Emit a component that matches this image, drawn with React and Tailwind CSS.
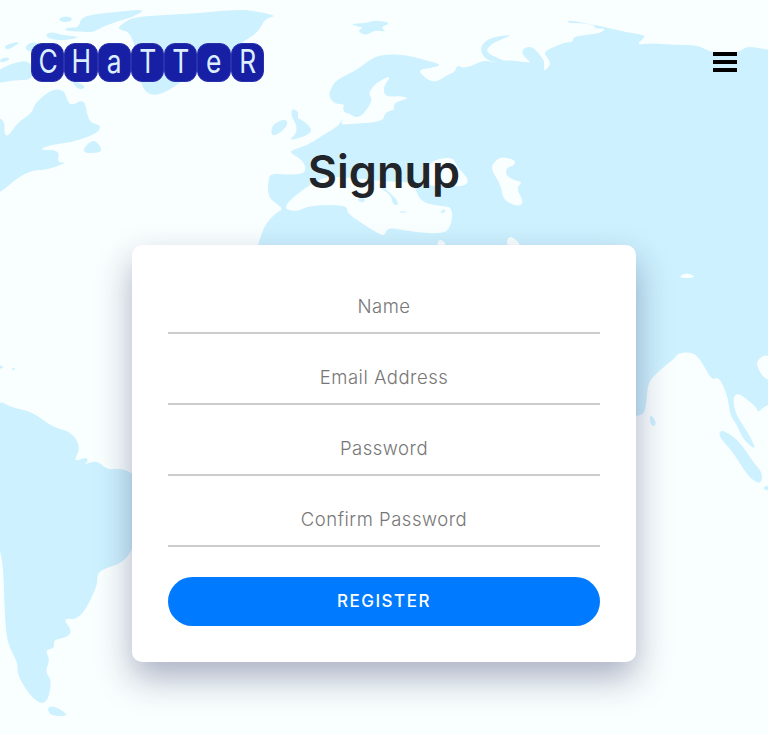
const smooth = (p) => {
  const m = (a, b) => [(a[0] + b[0]) / 2, (a[1] + b[1]) / 2];
  const n = p.length;
  const s = m(p[n - 1], p[0]);
  let d = `M${s[0]} ${s[1]}`;
  for (let i = 0; i < n; i++) {
    const e = m(p[i], p[(i + 1) % n]);
    d += `Q${p[i][0]} ${p[i][1]} ${e[0]} ${e[1]}`;
  }
  return d + "Z";
};

const land = [
  // Eurasia and Africa, west coast going clockwise
  [330, 90], [336, 80], [357, 70], [372, 58], [385, 54], [407, 55], [425, 60], [443, 65], [430, 68], [418, 70], [425, 78], [433, 82],
  [440, 80], [447, 75], [455, 72], [457, 65], [463, 68], [472, 66], [483, 60], [497, 63], [503, 60], [518, 61], [531, 63], [528, 60], [521, 53],
  [525, 47], [533, 47], [540, 55], [545, 62], [543, 72], [551, 65], [548, 58], [543, 52], [558, 45], [567, 42], [573, 42], [573, 37], [585, 35], [601, 33],
  [606, 28], [595, 29], [595, 25], [580, 23], [568, 23], [568, 20], [585, 23], [605, 27], [625, 32], [645, 35], [644, 38], [636, 45], [651, 43],
  [675, 45], [698, 45], [710, 52], [725, 53], [740, 52], [745, 47], [755, 47], [768, 50], [790, 52], [790, 410], [768, 403], [758, 413], [757, 408],
  [748, 400], [738, 393], [733, 397], [735, 413], [745, 428], [753, 442], [755, 449], [749, 445], [742, 437], [737, 425], [730, 415], [728, 398],
  [723, 385], [718, 377], [712, 380], [705, 368], [699, 358], [692, 352], [678, 353], [675, 358], [660, 370], [648, 382], [647, 397], [645, 412], [640, 416],
  [600, 420], [300, 420], [240, 300], [258, 245], [262, 232], [267, 222], [276, 213], [283, 209], [278, 205], [268, 197], [268, 183], [270, 173], [290, 175],
  [307, 173], [303, 160], [290, 153], [292, 150], [308, 145], [320, 137], [340, 125], [342, 118], [350, 116], [342, 110], [345, 104], [335, 104], [329, 97],
];

const seas = [
  // Baltic
  [[392, 75], [377, 82], [368, 93], [373, 100], [363, 115], [355, 118], [346, 111], [340, 125], [347, 124], [383, 122], [385, 112], [395, 110], [393, 103], [410, 98], [400, 96], [385, 97], [383, 87]],
  // Mediterranean
  [[281, 208], [297, 212], [310, 205], [347, 205], [347, 213], [360, 222], [377, 233], [385, 236], [387, 227], [413, 232], [443, 234], [451, 227], [453, 207], [440, 206], [420, 202], [413, 182], [395, 182], [350, 178], [327, 176], [307, 186]],
  // Black Sea
  [[426, 162], [453, 156], [457, 167], [470, 180], [463, 187], [443, 185], [426, 187]],
  // Caspian
  [[490, 168], [497, 159], [503, 157], [515, 160], [515, 165], [506, 168], [506, 175], [513, 180], [523, 182], [516, 188], [524, 202], [518, 207], [503, 200], [501, 185]],
  // Red Sea and gulfs
  [[508, 237], [513, 237], [522, 246], [506, 246]],
  [[436, 246], [440, 238], [448, 246]],
  [[677, 278], [687, 272], [697, 278]],
  [[768, 353], [757, 360], [757, 368], [768, 383], [780, 370]],
];

const islands = [
  // Greenland
  [[117, 29], [122, 24], [133, 17], [165, 15], [200, 13], [230, 10], [250, 10], [278, 16], [265, 18], [258, 33], [240, 43], [225, 62], [190, 75], [170, 90], [155, 96], [145, 92], [140, 80], [133, 33]],
  // Canadian arctic
  [[88, 15], [115, 12], [147, 9], [133, 17], [115, 22], [100, 28], [92, 33], [72, 30], [80, 25], [80, 20]],
  [[58, 19], [65, 16], [73, 18], [70, 22], [62, 22]],
  [[46, 34], [52, 32], [62, 35], [82, 37], [62, 41], [47, 38]],
  [[65, 28], [80, 27], [88, 32], [66, 31]],
  [[4, 45], [22, 41], [12, 48], [6, 50]],
  [[25, 45], [37, 41], [40, 50], [27, 52]],
  [[0, 59], [8, 57], [10, 60], [0, 63]],
  [[-5, 72], [12, 63], [31, 60], [34, 80], [14, 80], [-5, 84]],
  [[72, 80], [86, 86], [82, 90], [75, 87]],
  // North America
  [[52, 89], [62, 90], [65, 93], [70, 107], [85, 98], [88, 122], [100, 125], [100, 130], [93, 135], [73, 142], [50, 145], [38, 150], [60, 150], [57, 163], [68, 162], [47, 170], [33, 170], [17, 178], [0, 193], [-10, 195], [-10, 115], [5, 120], [4, 133], [8, 137], [17, 123], [32, 113], [35, 103]],
  [[93, 138], [102, 148], [100, 153], [80, 153]],
  [[-3, 168], [4, 171], [-3, 175]],
  // Iceland, Britain
  [[272, 126], [280, 120], [288, 120], [286, 128], [275, 136], [271, 134]],
  [[292, 108], [299, 112], [297, 118], [304, 121], [313, 130], [306, 136], [288, 141], [296, 134], [297, 125], [291, 116]],
  // Novaya Zemlya, Svalbard
  [[479, 50], [487, 38], [515, 34], [497, 41], [489, 46], [486, 52], [497, 58], [508, 62], [488, 62]],
  [[348, 24], [367, 23], [375, 20], [392, 23], [380, 27], [387, 32], [375, 30], [365, 36], [357, 30], [365, 28]],
  // Italy, Mediterranean islands
  [[377, 182], [395, 197], [399, 205], [393, 205], [391, 195], [380, 188]],
  [[357, 200], [362, 197], [366, 200], [362, 203]],
  [[400, 211], [410, 212], [400, 213]],
  [[439, 213], [445, 208], [445, 213]],
  // Sri Lanka, Indonesia
  [[650, 413], [657, 423], [653, 427], [650, 423]],
  [[719, 431], [725, 431], [740, 442], [753, 462], [762, 472], [762, 482], [757, 483], [747, 475], [733, 452], [720, 438]],
  [[762, 488], [768, 485], [775, 490], [768, 491]],
  // South America
  [[-5, 398], [10, 407], [33, 412], [52, 427], [72, 432], [81, 448], [73, 462], [87, 457], [88, 462], [83, 465], [97, 460], [107, 470], [120, 468], [135, 474], [150, 500], [135, 543], [125, 562], [100, 570], [97, 577], [97, 587], [80, 620], [62, 618], [72, 630], [68, 637], [53, 640], [55, 648], [45, 650], [50, 660], [45, 672], [52, 680], [47, 705], [33, 700], [17, 675], [18, 663], [8, 645], [5, 623], [3, 557], [-5, 540]],
  [[48, 707], [55, 706], [70, 716], [53, 716], [48, 712]],
  [[-3, 364], [5, 367], [-3, 370]],
  [[11, 368], [16, 368], [13, 371]],
];

const Field = ({ placeholder, type = "text" }) => (
  <input
    type={type}
    placeholder={placeholder}
    className="block h-[53px] w-full border-b-2 border-[#cccccc] bg-white pb-[2px] text-center font-['Inter',sans-serif] text-[18.5px] font-light tracking-[0.5px] text-[#495057] outline-none placeholder:text-[#777777]"
  />
);

const Tile = ({ children }) => (
  <div className="flex h-[39px] items-center justify-center rounded-[11px] border border-[#2a32ab] bg-[#171fa5]">
    <span className="scale-x-[0.8] pb-[3px] font-['Inter',sans-serif] text-[33px] leading-none font-normal text-[#dcefff]">
      {children}
    </span>
  </div>
);

export default function App() {
  return (
    <div className="relative h-[734px] w-full overflow-hidden bg-[#f9fffe]">
      <svg
        className="absolute inset-0"
        width="768"
        height="734"
        viewBox="0 0 768 734"
        aria-hidden="true"
      >
        <path d={smooth(land)} fill="#cdf1fe" />
        {seas.map((s, i) => (
          <path key={i} d={smooth(s)} fill="#f9fffe" />
        ))}
        {islands.map((s, i) => (
          <path key={i} d={smooth(s)} fill="#cdf1fe" />
        ))}
      </svg>

      <div className="relative flex flex-col items-center">
        <header className="flex w-full items-start justify-between pt-[43px] pr-[31px] pl-[31px]">
          <div className="grid h-[39px] w-[233px] grid-cols-7">
            {["C", "H", "a", "T", "T", "e", "R"].map((c, i) => (
              <Tile key={i}>{c}</Tile>
            ))}
          </div>
          <button className="mt-[9px] flex w-6 flex-col gap-1" aria-label="Menu">
            <span className="h-1 w-6 bg-black" />
            <span className="h-1 w-6 bg-black" />
            <span className="h-1 w-6 bg-black" />
          </button>
        </header>

        <h1 className="mt-[65px] h-[50px] font-['Inter',sans-serif] text-[45px] leading-[50px] font-semibold text-[#212529]">
          Signup
        </h1>

        <form className="mt-[48px] flex w-[504px] flex-col rounded-[10px] bg-white px-9 pt-9 pb-9 shadow-[0_16px_34px_rgba(35,35,95,0.36)]">
          <div className="flex flex-col gap-[18px]">
            <Field placeholder="Name" />
            <Field placeholder="Email Address" type="email" />
            <Field placeholder="Password" type="password" />
            <Field placeholder="Confirm Password" type="password" />
          </div>
          <button
            type="button"
            className="mt-[30px] h-[49px] w-full rounded-[25px] bg-[#007bff] font-['Inter',sans-serif] text-[17px] font-medium tracking-[1.5px] text-white"
          >
            REGISTER
          </button>
        </form>
      </div>
    </div>
  );
}
